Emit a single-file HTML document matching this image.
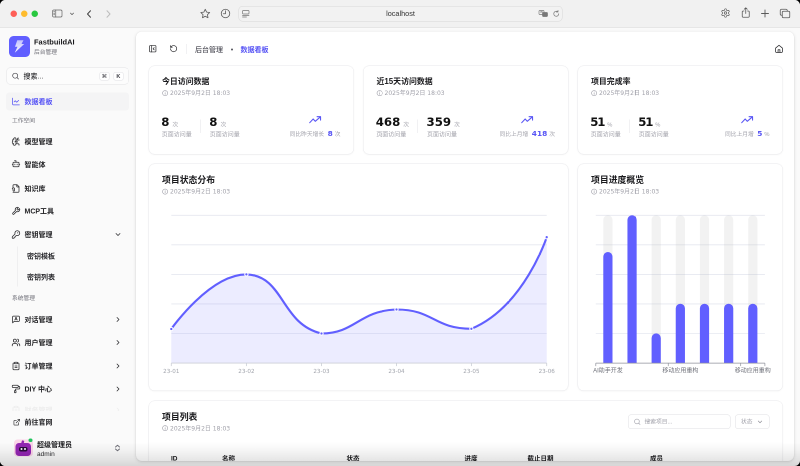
<!DOCTYPE html>
<html lang="zh-CN">
<head>
<meta charset="utf-8">
<title>FastbuildAI 数据看板</title>
<style>
*{box-sizing:border-box;margin:0;padding:0}
html,body{width:800px;height:466px;overflow:hidden;background:#000}
body{font-family:"Liberation Sans","Noto Sans CJK SC",sans-serif;color:#18181b}
#s{position:absolute;left:0;top:0;width:1600px;height:932px;transform:scale(.5);transform-origin:0 0;will-change:transform}
#win{position:absolute;left:0;top:0;width:1600px;height:932px;border-radius:11px;overflow:hidden;background:#fafafa}
.abs{position:absolute}
svg{display:block;overflow:visible}
/* title bar */
#tb{position:absolute;left:0;top:0;width:1600px;height:56px;background:#f1f1f1;border-bottom:1px solid #dcdcdc}
.tl{position:absolute;top:20.500px;width:13px;height:13px;border-radius:50%}
#url{position:absolute;left:477px;top:12px;width:648px;height:31px;border-radius:8px;background:#f2f2f2;border:1px solid #d8d8d8}
#url span{position:absolute;left:0;right:0;top:6px;text-align:center;font-size:14.600px;color:#333}
.ti{position:absolute;stroke:#5a5a5a;fill:none;stroke-width:1.6;stroke-linecap:round;stroke-linejoin:round}
/* sidebar */
#sb{position:absolute;left:0;top:56px;width:272px;height:876px;background:#fafafa}
.mi{position:absolute;left:12px;width:246px;height:36px;font-size:14px;font-weight:700;color:#232326;white-space:nowrap}
.mi .t{position:absolute;left:37px;top:9px;line-height:18px}
.mi svg.ic{position:absolute;left:11px;top:9px;width:18px;height:18px;stroke:#27272a;fill:none;stroke-width:2;stroke-linecap:round;stroke-linejoin:round}
.mi svg.ch{position:absolute;left:216px;top:10px;width:16px;height:16px;stroke:#27272a;fill:none;stroke-width:2.200;stroke-linecap:round;stroke-linejoin:round}
.gl{position:absolute;left:24px;font-size:11.5px;color:#71717a;white-space:nowrap;line-height:14px}
.sub{position:absolute;left:54px;font-size:14px;font-weight:700;color:#2a2a2e;white-space:nowrap;line-height:18px}
/* main panel */
#pn{position:absolute;left:272px;top:63px;width:1316px;height:859px;background:#fff;border-radius:12px;overflow:hidden;box-shadow:0 0 0 1px rgba(0,0,0,.035),0 2px 6px rgba(0,0,0,.13)}
.card{position:absolute;background:#fff;border:1px solid #e9e9ec;border-radius:12px;box-shadow:0 1px 3px rgba(0,0,0,.04)}
.ct{position:absolute;left:26px;top:19px;font-size:15.800px;font-weight:700;color:#18181b;white-space:nowrap;line-height:24px}
.cs{position:absolute;left:26px;top:46px;font-family:"DejaVu Sans","Noto Sans CJK SC",sans-serif;font-size:12px;color:#a1a1aa;white-space:nowrap;line-height:16px}
.cs svg{display:inline-block;vertical-align:-2px;margin-right:3.500px;width:12.500px;height:12.500px;stroke:#a1a1aa;fill:none;stroke-width:1.2}
.num{position:absolute;top:96px;font-size:27px;font-weight:700;color:#111;line-height:32px;white-space:nowrap}
.num small{font-size:12px;font-weight:400;color:#a1a1aa;margin-left:7px}
.lab{position:absolute;top:131px;font-size:11.5px;color:#a1a1aa;white-space:nowrap;line-height:14px}
.vs{position:absolute;top:106px;width:1px;height:28px;background:#e4e4e7}
.tr{position:absolute;right:26px;top:127px;font-size:11.5px;color:#a1a1aa;white-space:nowrap;line-height:18px}
.tr b{font-size:16px;font-weight:500;color:#5b5ef0;margin:0 2px 0 3px;vertical-align:-1px}
.tri{position:absolute;top:99px;width:25px;height:15.700px;stroke:#5754f5;fill:none;stroke-width:2.300;stroke-linecap:round;stroke-linejoin:round}

.hi{stroke:#27272a;fill:none;stroke-width:2;stroke-linecap:round;stroke-linejoin:round}
.st{position:absolute;left:24.500px;top:97px;display:flex}
.sb1{padding-right:17px;border-right:1px solid transparent;position:relative}
.sb1:after{content:"";position:absolute;right:0;top:10px;width:1px;height:27px;background:#e4e4e7}
.sb2{padding-left:17px}
.st .n{font-family:"DejaVu Sans","Liberation Sans",sans-serif;font-size:23.500px;font-weight:700;color:#111;line-height:30px;white-space:nowrap}
.st .n small{font-family:"Liberation Sans","Noto Sans CJK SC",sans-serif;font-size:11.500px;font-weight:400;color:#a1a1aa;margin-left:6px;position:relative;top:1px}
.st .l{font-size:12px;color:#a1a1aa;white-space:nowrap;line-height:14px;margin-top:-1.500px;padding-left:1px}
.trb{position:absolute;right:26px;top:100px;display:flex;flex-direction:column;align-items:center}
.trb .tri{position:static}
.trt{margin-top:9px;font-size:11.500px;color:#a1a1aa;white-space:nowrap;line-height:20px}
.trt b{font-family:"DejaVu Sans","Liberation Sans",sans-serif;font-size:14.800px;font-weight:700;color:#5754f5;margin:0 4px 0 7px;vertical-align:-.5px}
.th{position:absolute;top:106px;font-size:13px;font-weight:700;color:#18181b;white-space:nowrap;line-height:18px}
#shade{position:absolute;left:0;top:884px;width:1600px;height:48px;pointer-events:none;background:linear-gradient(to bottom,rgba(0,0,0,0) 0,rgba(0,0,0,.035) 16px,rgba(0,0,0,.10) 38px,rgba(0,0,0,.14) 48px)}
.ct.lg{font-size:17.700px;top:20px}
.cs.lg{top:47px}
</style>
</head>
<body>
<div id="s"><div id="win">

<!-- TITLE BAR -->
<div id="tb">
  <div class="tl" style="left:20.500px;background:#fe5f57"></div>
  <div class="tl" style="left:41.500px;background:#febc2e"></div>
  <div class="tl" style="left:62.500px;background:#28c840"></div>
  <div id="url"><span>localhost</span></div>

  <svg class="ti" style="left:104px;top:19px;stroke-width:1.400;stroke:#666" width="21" height="16" viewBox="0 0 21 16"><rect x="1" y="1" width="19" height="14" rx="2.500"/><path d="M7.500 1v14M3.300 4.500h2M3.300 7.500h2M3.300 10.500h2"/></svg>
  <svg class="ti" style="left:139.500px;top:25px" width="8" height="6" viewBox="0 0 8 6"><path d="M1 1.200L4 4.200l3-3"/></svg>
  <svg class="ti" style="left:173px;top:19.500px;stroke-width:2;stroke:#444" width="10" height="16" viewBox="0 0 10 16"><path d="M8 1.500L2 8l6 6.500"/></svg>
  <svg class="ti" style="left:212px;top:19.500px;stroke-width:2;stroke:#bdbdbd" width="10" height="16" viewBox="0 0 10 16"><path d="M2 1.500L8 8l-6 6.500"/></svg>
  <svg class="ti" style="left:400px;top:17px" width="21" height="20" viewBox="0 0 21 20"><path d="M10.500 1.500l2.700 5.700 6.200.800-4.500 4.300 1.100 6.200-5.500-3-5.500 3 1.100-6.200L1.600 8l6.200-.800z"/></svg>
  <svg class="ti" style="left:441px;top:17px" width="20" height="20" viewBox="0 0 20 20"><circle cx="10" cy="10" r="8.500"/><path d="M10 4.500V10.500H5.500"/></svg>
  <svg class="ti" style="left:484px;top:20px;stroke-width:1.400;stroke:#777" width="15" height="15" viewBox="0 0 15 15"><rect x="1" y="1" width="13" height="7" rx="1.500"/><path d="M1 11h13M1 14h8"/></svg>
  <svg class="ti" style="left:1077px;top:20px;stroke-width:1.300;stroke:#777" width="20" height="15" viewBox="0 0 20 15"><rect x="1" y="1" width="10" height="8" rx="1.500"/><rect x="8" y="5" width="10" height="8" rx="1.500" fill="#777"/><path d="M3.500 4h5M6 3v1"/></svg>
  <svg class="ti" style="left:1105px;top:20px;stroke-width:1.400;stroke:#777" width="15" height="15" viewBox="0 0 15 15"><path d="M12.500 7.500a5 5 0 1 1-1.800-3.800M11 .8v3.200H7.800"/></svg>
  <svg class="ti" style="left:1441px;top:16px;stroke-width:1.500" width="20" height="20" viewBox="0 0 24 24"><path d="M12.220 2h-.44a2 2 0 0 0-2 2v.18a2 2 0 0 1-1 1.730l-.43.250a2 2 0 0 1-2 0l-.15-.080a2 2 0 0 0-2.730.730l-.22.380a2 2 0 0 0 .73 2.730l.15.100a2 2 0 0 1 1 1.720v.51a2 2 0 0 1-1 1.740l-.15.090a2 2 0 0 0-.73 2.730l.22.380a2 2 0 0 0 2.730.730l.15-.080a2 2 0 0 1 2 0l.43.250a2 2 0 0 1 1 1.730V20a2 2 0 0 0 2 2h.44a2 2 0 0 0 2-2v-.18a2 2 0 0 1 1-1.730l.43-.250a2 2 0 0 1 2 0l.15.080a2 2 0 0 0 2.730-.730l.22-.390a2 2 0 0 0-.73-2.730l-.15-.080a2 2 0 0 1-1-1.740v-.5a2 2 0 0 1 1-1.740l.15-.090a2 2 0 0 0 .73-2.730l-.22-.380a2 2 0 0 0-2.730-.730l-.15.080a2 2 0 0 1-2 0l-.43-.250a2 2 0 0 1-1-1.730V4a2 2 0 0 0-2-2z" stroke-width="1.600"/><circle cx="12" cy="12" r="3" stroke-width="1.600"/></svg>
  <svg class="ti" style="left:1483px;top:14px" width="17" height="22" viewBox="0 0 17 22"><path d="M5 8H3.500a2 2 0 0 0-2 2v8.500a2 2 0 0 0 2 2h10a2 2 0 0 0 2-2V10a2 2 0 0 0-2-2H12M8.500 13V1.500M5.500 4.500l3-3 3 3"/></svg>
  <svg class="ti" style="left:1522px;top:19px;stroke-width:1.800" width="16" height="16" viewBox="0 0 16 16"><path d="M8 1v14M1 8h14"/></svg>
  <svg class="ti" style="left:1559px;top:17px" width="22" height="20" viewBox="0 0 22 20"><path d="M5.500 13.500H4a2.500 2.500 0 0 1-2.500-2.500V4A2.500 2.500 0 0 1 4 1.500h9A2.500 2.500 0 0 1 15.500 4v1.500"/><rect x="5.500" y="5.500" width="15" height="13" rx="2.500"/></svg>
</div>

<!-- SIDEBAR -->
<div id="sb">

  <div class="abs" style="left:17.500px;top:16px;width:42px;height:42px;border-radius:9px;background:#615fff"></div>
  <svg class="abs" style="left:28px;top:24px" width="21" height="26" viewBox="0 0 21 26"><defs><linearGradient id="lg" x1="0" y1="0" x2="0" y2="1"><stop offset="0" stop-color="#fff" stop-opacity=".62"/><stop offset="1" stop-color="#fff" stop-opacity=".97"/></linearGradient></defs><path d="M6.500 0.500L19 0.500L15 8L20.500 8L1.500 25.500L7 13.500L2 13.500Z" fill="url(#lg)"/></svg>
  <div class="abs" style="left:68px;top:19px;font-size:14.900px;font-weight:700;color:#18181b;line-height:18px;white-space:nowrap" id="brand">FastbuildAI</div>
  <div class="abs" style="left:68px;top:41px;font-size:11.500px;color:#6b6b74;line-height:14px;white-space:nowrap">后台管理</div>
  <div class="abs" style="left:13px;top:79px;width:244px;height:34px;border:1px solid #e2e2e5;border-radius:7px;background:#fcfcfc"></div>
  <svg class="abs" style="left:23px;top:88px;stroke:#3f3f46;fill:none;stroke-width:2" width="16" height="16" viewBox="0 0 24 24"><circle cx="11" cy="11" r="7.500"/><path d="m21 21-4.500-4.500" stroke-linecap="round"/></svg>
  <div class="abs" style="left:47px;top:87px;font-size:14px;font-weight:500;color:#27272a;line-height:18px;white-space:nowrap">搜索...</div>
  <div class="abs" style="left:199px;top:87.500px;width:19.500px;height:17px;border:1px solid #e0e0e4;border-radius:4px;background:#fff;font-family:'DejaVu Sans',sans-serif;font-size:11px;line-height:15px;text-align:center;color:#3f3f46">⌘</div>
  <div class="abs" style="left:227px;top:87.500px;width:19.500px;height:17px;border:1px solid #e0e0e4;border-radius:4px;background:#fff;font-size:11px;font-weight:700;line-height:15px;text-align:center;color:#3f3f46">K</div>
<div class="mi" style="top:129px;background:#f4f4f5;border-radius:7px;color:#5754f5;"><svg class="ic" viewBox="0 0 24 24" style="stroke:#5754f5"><path d="M3 3v16a2 2 0 0 0 2 2h16"/><path d="m19 9-5 5-4-4-3 3"/></svg><span class="t">数据看板</span></div>
<div class="gl" style="top:178px">工作空间</div>
<div class="mi" style="top:209px;"><svg class="ic" viewBox="0 0 24 24"><path d="M12 5a3 3 0 1 0-5.997.125 4 4 0 0 0-2.526 5.770 4 4 0 0 0 .556 6.588A4 4 0 1 0 12 18Z"/><path d="M9 13a4.500 4.500 0 0 0 3-4"/><path d="M6.003 5.125A3 3 0 0 0 6.401 6.500"/><path d="M3.477 10.896a4 4 0 0 1 .585-.396"/><path d="M6 18a4 4 0 0 1-1.967-.516"/><path d="M12 13h4"/><path d="M12 18h6a2 2 0 0 1 2 2v1"/><path d="M12 8h8"/><path d="M16 8V5a2 2 0 0 1 2-2"/><circle cx="16" cy="13" r=".5"/><circle cx="18" cy="3" r=".5"/><circle cx="20" cy="21" r=".5"/><circle cx="20" cy="8" r=".5"/></svg><span class="t">模型管理</span></div>
<div class="mi" style="top:255px;"><svg class="ic" viewBox="0 0 24 24"><path d="M12 6V2H8"/><path d="M2 12h2"/><path d="M20 12h2"/><rect x="4" y="6" width="16" height="12" rx="2"/><path d="M9 11v2M15 11v2"/></svg><span class="t">智能体</span></div>
<div class="mi" style="top:303px;"><svg class="ic" viewBox="0 0 24 24"><path d="M4 22h14a2 2 0 0 0 2-2V7l-5-5H6a2 2 0 0 0-2 2v4"/><path d="M14 2v4a2 2 0 0 0 2 2h4"/><path d="M2 13a3 3 0 0 1 6 0v4a2 2 0 0 1-4 0v-3"/></svg><span class="t">知识库</span></div>
<div class="mi" style="top:348px;"><svg class="ic" viewBox="0 0 24 24"><path d="M14.700 6.300a1 1 0 0 0 0 1.400l1.600 1.600a1 1 0 0 0 1.400 0l3.770-3.770a6 6 0 0 1-7.940 7.940l-6.910 6.910a2.120 2.120 0 0 1-3-3l6.910-6.910a6 6 0 0 1 7.940-7.940l-3.760 3.760z"/></svg><span class="t">MCP工具</span></div>
<div class="mi" style="top:395px;"><svg class="ic" viewBox="0 0 24 24"><path d="M2.586 17.414A2 2 0 0 0 2 18.828V21a1 1 0 0 0 1 1h3a1 1 0 0 0 1-1v-1a1 1 0 0 1 1-1h1a1 1 0 0 0 1-1v-1a1 1 0 0 1 1-1h.172a2 2 0 0 0 1.414-.586l.814-.814a6.500 6.500 0 1 0-4-4z"/><circle cx="16.500" cy="7.500" r=".5"/></svg><span class="t">密钥管理</span><svg class="ch" viewBox="0 0 24 24"><path d="m6 9 6 6 6-6"/></svg></div>
<div class="abs" style="left:34px;top:437px;width:1px;height:80px;background:#e4e4e7"></div>
<div class="sub" style="top:447px">密钥模板</div>
<div class="sub" style="top:489px">密钥列表</div>
<div class="gl" style="top:533px">系统管理</div>
<div class="mi" style="top:565px;"><svg class="ic" viewBox="0 0 24 24"><path d="M21 15a2 2 0 0 1-2 2H7l-4 4V5a2 2 0 0 1 2-2h14a2 2 0 0 1 2 2z"/><circle cx="12" cy="8" r="1.500"/><path d="M9 13.500a3 3 0 0 1 6 0"/></svg><span class="t">对话管理</span><svg class="ch" viewBox="0 0 24 24"><path d="m9 18 6-6-6-6"/></svg></div>
<div class="mi" style="top:611px;"><svg class="ic" viewBox="0 0 24 24"><path d="M16 21v-2a4 4 0 0 0-4-4H6a4 4 0 0 0-4 4v2"/><circle cx="9" cy="7" r="4"/><path d="M22 21v-2a4 4 0 0 0-3-3.870"/><path d="M16 3.130a4 4 0 0 1 0 7.750"/></svg><span class="t">用户管理</span><svg class="ch" viewBox="0 0 24 24"><path d="m9 18 6-6-6-6"/></svg></div>
<div class="mi" style="top:658px;"><svg class="ic" viewBox="0 0 24 24"><rect x="8" y="2" width="8" height="4" rx="1"/><path d="M16 4h2a2 2 0 0 1 2 2v14a2 2 0 0 1-2 2H6a2 2 0 0 1-2-2V6a2 2 0 0 1 2-2h2"/><path d="M9 12h6M9 16h6"/></svg><span class="t">订单管理</span><svg class="ch" viewBox="0 0 24 24"><path d="m9 18 6-6-6-6"/></svg></div>
<div class="mi" style="top:704px;"><svg class="ic" viewBox="0 0 24 24"><rect x="2" y="2" width="16" height="6" rx="2"/><path d="M10 16v-2a2 2 0 0 1 2-2h8a2 2 0 0 0 2-2V7a2 2 0 0 0-2-2h-2"/><rect x="8" y="16" width="4" height="6" rx="1"/></svg><span class="t">DIY 中心</span><svg class="ch" viewBox="0 0 24 24"><path d="m9 18 6-6-6-6"/></svg></div>
<div class="abs" style="left:0;top:752px;width:262px;height:14px;overflow:hidden;opacity:.06"><div class="mi" style="top:-6px;"><svg class="ic" viewBox="0 0 24 24"><rect x="8" y="2" width="8" height="4" rx="1"/><path d="M16 4h2a2 2 0 0 1 2 2v14a2 2 0 0 1-2 2H6a2 2 0 0 1-2-2V6a2 2 0 0 1 2-2h2"/><path d="M9 12h6M9 16h6"/></svg><span class="t">财务管理</span><svg class="ch" viewBox="0 0 24 24"><path d="m9 18 6-6-6-6"/></svg></div>
</div>
<div class="mi" style="top:770px;"><svg class="ic" style="left:14px;top:10.500px;width:15px;height:15px" viewBox="0 0 24 24"><path d="M15 3h6v6"/><path d="M10 14 21 3"/><path d="M18 13v6a2 2 0 0 1-2 2H5a2 2 0 0 1-2-2V8a2 2 0 0 1 2-2h6"/></svg><span class="t">前往官网</span></div>

  <div class="abs" style="left:28px;top:823px;width:38px;height:34px;border-radius:7px;background:#fbd5e8"></div>
  <div class="abs" style="left:31px;top:830px;width:31px;height:26px;border-radius:7px;background:#9326b3"></div>
  <div class="abs" style="left:43px;top:825px;width:5px;height:7px;border-radius:2px;background:#9326b3;transform:rotate(18deg)"></div>
  <div class="abs" style="left:38px;top:838px;width:17px;height:9px;border-radius:4px;background:#2a0a3a"></div>
  <div class="abs" style="left:41px;top:840px;width:4px;height:4px;border-radius:2px;background:#fff"></div>
  <div class="abs" style="left:48px;top:840px;width:4px;height:4px;border-radius:2px;background:#fff"></div>
  <div class="abs" style="left:57.300px;top:820.800px;width:7.600px;height:7.600px;border-radius:50%;background:#1fc45c"></div>
  <div class="abs" style="left:74px;top:824px;font-size:14px;font-weight:700;color:#18181b;line-height:18px;white-space:nowrap">超级管理员</div>
  <div class="abs" style="left:74px;top:844px;font-size:13px;color:#27272a;line-height:16px;white-space:nowrap">admin</div>
  <svg class="abs" style="left:228px;top:832px;stroke:#71717a;fill:none;stroke-width:2;stroke-linecap:round;stroke-linejoin:round" width="14" height="16" viewBox="0 0 14 16"><path d="M3 6l4-3.500L11 6M3 10l4 3.500L11 10"/></svg>
</div>

<!-- MAIN PANEL -->
<div id="pn"><div class="abs" style="left:0;top:-1px">

  <svg class="abs hi" style="left:24.500px;top:26.700px" width="17" height="17" viewBox="0 0 24 24"><rect x="3" y="3" width="18" height="18" rx="2"/><path d="M9 3v18"/><path d="m16 15-3-3 3-3"/></svg>
  <svg class="abs hi" style="left:66.500px;top:27px" width="16.500" height="16.500" viewBox="0 0 24 24"><path d="M3 12a9 9 0 1 0 9-9 9.750 9.750 0 0 0-6.740 2.740L3 8"/><path d="M3 3v5h5"/></svg>
  <div class="abs" style="left:100px;top:26px;width:1px;height:20px;background:#e4e4e7"></div>
  <div class="abs" style="left:118px;top:28px;font-size:14px;font-weight:500;color:#52525b;line-height:18px;white-space:nowrap">后台管理</div>
  <div class="abs" style="left:189.500px;top:34.500px;width:4.500px;height:4.500px;border-radius:50%;background:#52525b"></div>
  <div class="abs" style="left:209px;top:28px;font-size:14px;font-weight:700;color:#5754f5;line-height:18px;white-space:nowrap">数据看板</div>
  <svg class="abs hi" style="left:1277px;top:26.700px" width="18" height="16.500" viewBox="0 0 24 22"><path d="M3 9.500L12 2l9 7.500V19a2 2 0 0 1-2 2H5a2 2 0 0 1-2-2z"/><path d="M9.500 21v-7h5v7"/></svg>
<div class="card" style="left:25px;top:69px;width:411px;height:178px">
  <div class="ct">今日访问数据</div><div class="cs"><svg viewBox="0 0 12 12"><circle cx="6" cy="6" r="5"/><path d="M6 5.500v3M6 3.400v.300" stroke-linecap="round"/></svg>2025年9月2日 18:03</div>
  <div class="st"><div class="sb1"><div class="n">8<small>次</small></div><div class="l">页面访问量</div></div><div class="sb2"><div class="n">8<small>次</small></div><div class="l">页面访问量</div></div></div>
  <div class="trb"><svg class="tri" viewBox="0 0 27 17"><path d="M1.500 14.500L9 6.500l4.500 5L24.500 2"/><path d="M17.500 1.500h7.500v7.500"/></svg><div class="trt">同比昨天增长<b>8</b>次</div></div>
</div>
<div class="card" style="left:454px;top:69px;width:411px;height:178px">
  <div class="ct">近15天访问数据</div><div class="cs"><svg viewBox="0 0 12 12"><circle cx="6" cy="6" r="5"/><path d="M6 5.500v3M6 3.400v.300" stroke-linecap="round"/></svg>2025年9月2日 18:03</div>
  <div class="st"><div class="sb1"><div class="n">468<small>次</small></div><div class="l">页面访问量</div></div><div class="sb2"><div class="n">359<small>次</small></div><div class="l">页面访问量</div></div></div>
  <div class="trb"><svg class="tri" viewBox="0 0 27 17"><path d="M1.500 14.500L9 6.500l4.500 5L24.500 2"/><path d="M17.500 1.500h7.500v7.500"/></svg><div class="trt">同比上月增<b>418</b>次</div></div>
</div>
<div class="card" style="left:883px;top:69px;width:411px;height:178px">
  <div class="ct">项目完成率</div><div class="cs"><svg viewBox="0 0 12 12"><circle cx="6" cy="6" r="5"/><path d="M6 5.500v3M6 3.400v.300" stroke-linecap="round"/></svg>2025年9月2日 18:03</div>
  <div class="st"><div class="sb1"><div class="n"><span style="letter-spacing:-2.400px">51</span><small>%</small></div><div class="l">页面访问量</div></div><div class="sb2"><div class="n"><span style="letter-spacing:-2.400px">51</span><small>%</small></div><div class="l">页面访问量</div></div></div>
  <div class="trb"><svg class="tri" viewBox="0 0 27 17"><path d="M1.500 14.500L9 6.500l4.500 5L24.500 2"/><path d="M17.500 1.500h7.500v7.500"/></svg><div class="trt">同比上月增<b>5</b>%</div></div>
</div>
<div class="card" style="left:25px;top:265px;width:840px;height:455px">
  <div class="ct lg">项目状态分布</div><div class="cs lg"><svg viewBox="0 0 12 12"><circle cx="6" cy="6" r="5"/><path d="M6 5.500v3M6 3.400v.300" stroke-linecap="round"/></svg>2025年9月2日 18:03</div>
  <svg class="abs" style="left:0;top:0" width="840" height="455" viewBox="0 0 840 455"><path d="M44.6 102.6H795.4" stroke="#e6e8f0" stroke-width="1.700"/><path d="M44.6 161.7H795.4" stroke="#e6e8f0" stroke-width="1.700"/><path d="M44.6 220.8H795.4" stroke="#e6e8f0" stroke-width="1.700"/><path d="M44.6 279.9H795.4" stroke="#e6e8f0" stroke-width="1.700"/><path d="M44.6 339.0H795.4" stroke="#e6e8f0" stroke-width="1.700"/><path d="M44.6 330 C44.6 330.0 120.8 220.8 194.8 220.8 C271.0 223.1 262.7 319.8 345 339.0 C412.8 339.0 419.4 293.4 495 291.0 C569.3 291.0 569.5 329.6 644.8 329.6 C749.7 285.8 795.4 146.4 795.4 146.4 L795.4 398.2 L44.6 398.2 Z" fill="#615fff" fill-opacity=".12"/><path d="M44.6 398.2H795.4" stroke="#cdd0d8" stroke-width="1.700"/><path d="M44.6 398.2v6" stroke="#cdd0d8" stroke-width="1.700"/><path d="M194.8 398.2v6" stroke="#cdd0d8" stroke-width="1.700"/><path d="M345 398.2v6" stroke="#cdd0d8" stroke-width="1.700"/><path d="M495 398.2v6" stroke="#cdd0d8" stroke-width="1.700"/><path d="M644.8 398.2v6" stroke="#cdd0d8" stroke-width="1.700"/><path d="M795.4 398.2v6" stroke="#cdd0d8" stroke-width="1.700"/><path d="M44.6 330 C44.6 330.0 120.8 220.8 194.8 220.8 C271.0 223.1 262.7 319.8 345 339.0 C412.8 339.0 419.4 293.4 495 291.0 C569.3 291.0 569.5 329.6 644.8 329.6 C749.7 285.8 795.4 146.4 795.4 146.4" fill="none" stroke="#615fff" stroke-width="4.200" stroke-linecap="round" stroke-linejoin="round"/><circle cx="44.6" cy="330" r="3.300" fill="#615fff" stroke="#fff" stroke-width="2"/><circle cx="194.8" cy="220.8" r="3.300" fill="#615fff" stroke="#fff" stroke-width="2"/><circle cx="345" cy="339.0" r="3.300" fill="#615fff" stroke="#fff" stroke-width="2"/><circle cx="495" cy="291.0" r="3.300" fill="#615fff" stroke="#fff" stroke-width="2"/><circle cx="644.8" cy="329.6" r="3.300" fill="#615fff" stroke="#fff" stroke-width="2"/><circle cx="795.4" cy="146.4" r="3.300" fill="#615fff" stroke="#fff" stroke-width="2"/><text x="44.6" y="417.6" text-anchor="middle" font-family="DejaVu Sans, sans-serif" font-size="11.200" fill="#a3a6ae">23-01</text><text x="194.8" y="417.6" text-anchor="middle" font-family="DejaVu Sans, sans-serif" font-size="11.200" fill="#a3a6ae">23-02</text><text x="345" y="417.6" text-anchor="middle" font-family="DejaVu Sans, sans-serif" font-size="11.200" fill="#a3a6ae">23-03</text><text x="495" y="417.6" text-anchor="middle" font-family="DejaVu Sans, sans-serif" font-size="11.200" fill="#a3a6ae">23-04</text><text x="644.8" y="417.6" text-anchor="middle" font-family="DejaVu Sans, sans-serif" font-size="11.200" fill="#a3a6ae">23-05</text><text x="795.4" y="417.6" text-anchor="middle" font-family="DejaVu Sans, sans-serif" font-size="11.200" fill="#a3a6ae">23-06</text></svg>
</div>
<div class="card" style="left:883px;top:265px;width:411px;height:455px">
  <div class="ct lg">项目进度概览</div><div class="cs lg"><svg viewBox="0 0 12 12"><circle cx="6" cy="6" r="5"/><path d="M6 5.500v3M6 3.400v.300" stroke-linecap="round"/></svg>2025年9月2日 18:03</div>
  <svg class="abs" style="left:0;top:0;overflow:hidden" width="385" height="455" viewBox="0 0 385 455"><path d="M35.6 102.6H373.8" stroke="#e6e8f0" stroke-width="1.700"/><path d="M35.6 161.7H373.8" stroke="#e6e8f0" stroke-width="1.700"/><path d="M35.6 220.8H373.8" stroke="#e6e8f0" stroke-width="1.700"/><path d="M35.6 279.9H373.8" stroke="#e6e8f0" stroke-width="1.700"/><path d="M35.6 339.0H373.8" stroke="#e6e8f0" stroke-width="1.700"/><path d="M50.6 398.2V111.8a9.2 9.2 0 0 1 18.4 0V398.2Z" fill="#b4b4b4" fill-opacity=".17"/><path d="M98.9 398.2V111.8a9.2 9.2 0 0 1 18.4 0V398.2Z" fill="#b4b4b4" fill-opacity=".17"/><path d="M147.2 398.2V111.8a9.2 9.2 0 0 1 18.4 0V398.2Z" fill="#b4b4b4" fill-opacity=".17"/><path d="M195.5 398.2V111.8a9.2 9.2 0 0 1 18.4 0V398.2Z" fill="#b4b4b4" fill-opacity=".17"/><path d="M243.8 398.2V111.8a9.2 9.2 0 0 1 18.4 0V398.2Z" fill="#b4b4b4" fill-opacity=".17"/><path d="M292.1 398.2V111.8a9.2 9.2 0 0 1 18.4 0V398.2Z" fill="#b4b4b4" fill-opacity=".17"/><path d="M340.4 398.2V111.8a9.2 9.2 0 0 1 18.4 0V398.2Z" fill="#b4b4b4" fill-opacity=".17"/><path d="M50.6 398.2V185.2a9.2 9.2 0 0 1 18.4 0V398.2Z" fill="#615fff" /><path d="M98.9 398.2V111.8a9.2 9.2 0 0 1 18.4 0V398.2Z" fill="#615fff" /><path d="M147.2 398.2V348.0a9.2 9.2 0 0 1 18.4 0V398.2Z" fill="#615fff" /><path d="M195.5 398.2V288.8a9.2 9.2 0 0 1 18.4 0V398.2Z" fill="#615fff" /><path d="M243.8 398.2V288.8a9.2 9.2 0 0 1 18.4 0V398.2Z" fill="#615fff" /><path d="M292.1 398.2V288.8a9.2 9.2 0 0 1 18.4 0V398.2Z" fill="#615fff" /><path d="M340.4 398.2V288.8a9.2 9.2 0 0 1 18.4 0V398.2Z" fill="#615fff" /><path d="M35.6 398.2H373.8" stroke="#8f929b" stroke-width="1.400"/><path d="M35.6 398.2v6" stroke="#8f929b" stroke-width="1.400"/><path d="M180.5 398.2v6" stroke="#8f929b" stroke-width="1.400"/><path d="M325.4 398.2v6" stroke="#8f929b" stroke-width="1.400"/><path d="M373.8 398.2v6" stroke="#8f929b" stroke-width="1.400"/><text x="59.8" y="417.1" text-anchor="middle" font-size="12" fill="#6e7079">AI助手开发</text><text x="204.7" y="417.1" text-anchor="middle" font-size="12" fill="#6e7079">移动应用重构</text><text x="349.6" y="417.1" text-anchor="middle" font-size="12" fill="#6e7079">移动应用重构</text></svg>
</div>
<div class="card" style="left:25px;top:738.500px;width:1269px;height:300px">
  <div class="ct lg">项目列表</div><div class="cs lg"><svg viewBox="0 0 12 12"><circle cx="6" cy="6" r="5"/><path d="M6 5.500v3M6 3.400v.300" stroke-linecap="round"/></svg>2025年9月2日 18:03</div>
  <div class="abs" style="left:958px;top:27px;width:205px;height:29px;border:1px solid #dfdfe3;border-radius:6px"></div>
  <svg class="abs" style="left:969px;top:34px;stroke:#a1a1aa;fill:none;stroke-width:2" width="15" height="15" viewBox="0 0 24 24"><circle cx="11" cy="11" r="7.500"/><path d="m21 21-4.500-4.500" stroke-linecap="round"/></svg>
  <div class="abs" style="left:991px;top:34px;font-size:11.500px;color:#a1a1aa;line-height:15px;white-space:nowrap">搜索项目...</div>
  <div class="abs" style="left:1172px;top:27px;width:69px;height:29px;border:1px solid #dfdfe3;border-radius:6px"></div>
  <div class="abs" style="left:1184px;top:34px;font-size:11.500px;color:#a1a1aa;line-height:15px;white-space:nowrap">状态</div>
  <svg class="abs" style="left:1216px;top:36px;stroke:#8b8b93;fill:none;stroke-width:2.400;stroke-linecap:round;stroke-linejoin:round" width="12" height="12" viewBox="0 0 24 24"><path d="m5 8 7 7 7-7"/></svg>
  <div class="th" style="left:44px">ID</div>
  <div class="th" style="left:146px">名称</div>
  <div class="th" style="left:395px">状态</div>
  <div class="th" style="left:631px">进度</div>
  <div class="th" style="left:757px">截止日期</div>
  <div class="th" style="left:1002px">成员</div>
</div>
</div></div>
<div id="shade"></div>

</div></div>
</body>
</html>
